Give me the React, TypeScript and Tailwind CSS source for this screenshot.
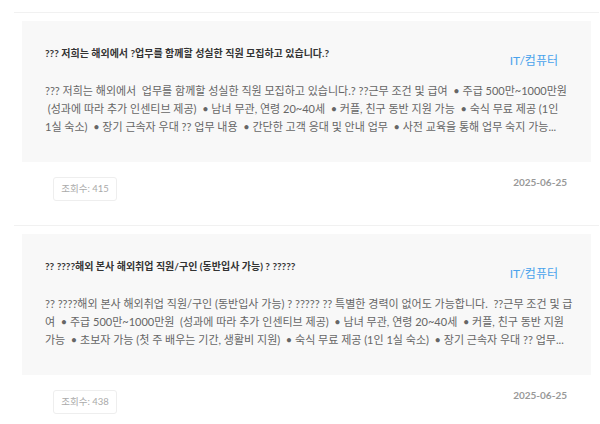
import { type ReactElement } from 'react';

interface JobPost {
  title: string;
  category: string;
  lines: string[];
  views: number;
  date: string;
}

const POSTS: JobPost[] = [
  {
    title: '??? 저희는 해외에서 ?업무를 함께할 성실한 직원 모집하고 있습니다.?',
    category: 'IT/컴퓨터',
    lines: [
      '??? 저희는 해외에서  업무를 함께할 성실한 직원 모집하고 있습니다.? ??근무 조건 및 급여  • 주급 500만~1000만원',
      ' (성과에 따라 추가 인센티브 제공)  • 남녀 무관, 연령 20~40세  • 커플, 친구 동반 지원 가능  • 숙식 무료 제공 (1인',
      '1실 숙소)  • 장기 근속자 우대 ?? 업무 내용  • 간단한 고객 응대 및 안내 업무  • 사전 교육을 통해 업무 숙지 가능...',
    ],
    views: 415,
    date: '2025-06-25',
  },
  {
    title: '?? ????해외 본사 해외취업 직원/구인 (동반입사 가능) ? ?????',
    category: 'IT/컴퓨터',
    lines: [
      '?? ????해외 본사 해외취업 직원/구인 (동반입사 가능) ? ????? ?? 특별한 경력이 없어도 가능합니다.  ??근무 조건 및 급',
      '여  • 주급 500만~1000만원  (성과에 따라 추가 인센티브 제공)  • 남녀 무관, 연령 20~40세  • 커플, 친구 동반 지원',
      '가능  • 초보자 가능 (첫 주 배우는 기간, 생활비 지원)  • 숙식 무료 제공 (1인 1실 숙소)  • 장기 근속자 우대 ?? 업무...',
    ],
    views: 438,
    date: '2025-06-25',
  },
];

function PostItem({ post }: { post: JobPost }): ReactElement {
  return (
    <li className="border-t border-[#f1f1f1] pt-2">
      <div className="mx-2 bg-[#f8f8f8] pb-[26px] pl-[23px] pr-[29px] pt-6">
        <div className="flex items-start justify-between">
          <h3 className="text-[10px] font-bold leading-4 text-[#333]">{post.title}</h3>
          <span className="mr-1 mt-[7px] text-[12px] leading-[18px] text-[#4aa3ec]">{post.category}</span>
        </div>
        <p className="mt-3 text-[11px] leading-[18px] text-[#666]">
          {post.lines.map((line, i) => (
            <span key={i} className="block whitespace-pre">
              {line}
            </span>
          ))}
        </p>
      </div>
      <div className="flex items-start justify-between pb-6 pl-[39px] pr-8 pt-[13px]">
        <span className="mt-[2px] w-16 rounded-[3px] border border-[#eee] py-[4px] text-center text-[9.5px] leading-[14px] text-[#aaa]">
          조회수: {post.views}
        </span>
        <span className="text-[10px] font-bold leading-[14px] text-[#999]">{post.date}</span>
      </div>
    </li>
  );
}

export default function App(): ReactElement {
  return (
    <div
      className="min-h-[424px] bg-white pt-3"
      style={{ fontFamily: 'Lato, "Noto Sans CJK KR", sans-serif' }}
    >
      <ul className="ml-[14px] mr-px">
        {POSTS.map((post, i) => (
          <PostItem key={i} post={post} />
        ))}
      </ul>
    </div>
  );
}
